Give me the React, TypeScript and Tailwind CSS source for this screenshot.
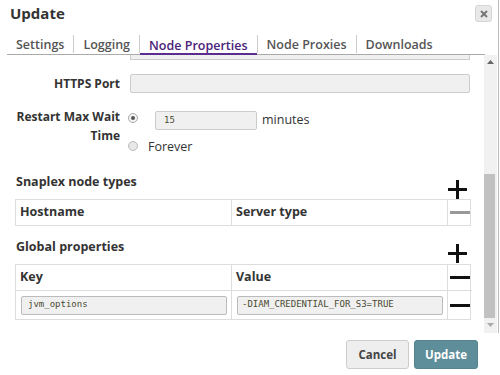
import React from 'react';

const Plus: React.FC = () => (
  <svg width="19" height="19" viewBox="0 0 19 19">
    <rect x="8" y="0" width="3" height="19" fill="#111" />
    <rect x="0" y="8" width="19" height="3" fill="#111" />
  </svg>
);

const Minus: React.FC<{ muted?: boolean }> = ({ muted }) => (
  <div className={muted ? 'w-[20px] h-[3px] bg-[#999]' : 'w-[20px] h-[3px] bg-[#111]'} />
);

const tabs = ['Settings', 'Logging', 'Node Properties', 'Node Proxies', 'Downloads'];

export default function App() {
  return (
    <div className="w-[500px] h-[375px] bg-white font-['Open_Sans',sans-serif] text-[#333] overflow-hidden">
      <div className="w-[499px] h-[333px] border-r border-[#bbb] flex flex-col">
        {/* Header */}
        <div className="flex items-center justify-between pt-[5px] pl-[10px] pr-[6px]">
          <h1 className="text-[15px] font-bold leading-[17px] text-[#333]">Update</h1>
          <button className="w-[17px] h-[17px] rounded-[3px] bg-[#e8e8e8] border border-[#d5d5d5] flex items-center justify-center">
            <svg width="8" height="8" viewBox="0 0 8 8">
              <path d="M1 1 L7 7 M7 1 L1 7" stroke="#777" strokeWidth="2" />
            </svg>
          </button>
        </div>

        {/* Tabs */}
        <div className="mt-[13px] ml-[7px] w-[478px] flex items-end border-b border-[#aaa] h-[20px]">
          {tabs.map((t, i) => (
            <React.Fragment key={t}>
              {i > 0 && <div className="w-px h-[18px] bg-[#ccc] mb-[1px]" />}
              <div
                className={
                  t === 'Node Properties'
                    ? 'px-[9px] pt-[2px] h-[20px] -mb-px border-b-2 border-[#5b2d8e] text-[#4b2378] text-[12.5px] font-semibold leading-[17px]'
                    : 'px-[9px] pt-[2px] h-[20px] text-[#555] text-[12.5px] font-semibold leading-[17px]'
                }
              >
                {t}
              </div>
            </React.Fragment>
          ))}
        </div>

        {/* Scroll area */}
        <div className="flex flex-1 min-h-0">
          <div className="ml-[7px] w-[477px] overflow-hidden">
            <div className="ml-[123px] w-[340px] h-[5px] border-x border-b border-[#ccc] bg-[#f0f0f0]" />

            <div className="mt-[14px] flex items-center">
              <div className="w-[113px] text-right text-[12px] font-bold leading-[19px]">HTTPS Port</div>
              <div className="ml-[10px] w-[340px] h-[19px] border border-[#ccc] rounded-[2px] bg-[#f0f0f0]" />
            </div>

            <div className="mt-[13px] flex items-start">
              <div className="w-[113px] pt-[1px] text-right text-[12px] font-bold leading-[19px]">Restart Max Wait Time</div>
              <div className="ml-[8px] flex flex-col">
                <div className="flex items-start">
                  <div className="mt-[7px] w-[10px] h-[10px] rounded-full border border-[#aaa] bg-[#f4f4f4] flex items-center justify-center">
                    <div className="w-[4px] h-[4px] rounded-full bg-[#555]" />
                  </div>
                  <div className="ml-[17px] mt-[5px] w-[102px] h-[19px] border border-[#ccc] rounded-[2px] bg-[#f0f0f0] flex items-center pl-[8px] font-['DejaVu_Sans_Mono',monospace] text-[9px] text-[#4a4a30]">
                    15
                  </div>
                  <div className="ml-[5px] mt-[4px] text-[12.5px] leading-[20px]">minutes</div>
                </div>
                <div className="mt-[6px] flex items-center">
                  <div className="w-[10px] h-[10px] rounded-full border border-[#bbb] bg-[#e8e8e8]" />
                  <div className="ml-[10px] mt-[3px] text-[12.5px] leading-[16px]">Forever</div>
                </div>
              </div>
            </div>

            {/* Snaplex node types */}
            <div className="mt-[19px] ml-[8px] w-[456px] flex items-start justify-between">
              <div className="ml-[1px] text-[12.5px] font-bold leading-[16px]">Snaplex node types</div>
              <div className="w-[25px] mt-[6px] flex justify-center pr-[2px]">
                <Plus />
              </div>
            </div>
            <div className="ml-[8px] w-[456px] grid grid-cols-[215px_216px_25px] border border-[#ddd]">
              <div className="h-[25px] px-[4px] flex items-center text-[12.5px] font-bold">Hostname</div>
              <div className="h-[25px] px-[4px] flex items-center text-[12.5px] font-bold border-l border-[#ddd]">Server type</div>
              <div className="h-[25px] flex items-center justify-center border-l border-[#ddd]">
                <Minus muted />
              </div>
            </div>

            {/* Global properties */}
            <div className="mt-[13px] ml-[8px] w-[456px] flex items-start justify-between">
              <div className="ml-[1px] text-[12.5px] font-bold leading-[16px]">Global properties</div>
              <div className="w-[25px] mt-[5px] flex justify-center pr-[2px]">
                <Plus />
              </div>
            </div>
            <div className="mt-[1px] ml-[8px] w-[456px] grid grid-cols-[215px_216px_25px] border border-[#ddd]">
              <div className="h-[25px] px-[4px] flex items-center text-[12.5px] font-bold">Key</div>
              <div className="h-[25px] px-[4px] flex items-center text-[12.5px] font-bold border-l border-[#ddd]">Value</div>
              <div className="h-[25px] flex items-center justify-center border-l border-[#ddd]">
                <Minus />
              </div>
              <div className="h-[29px] pl-[5px] pr-[4px] flex items-center border-t border-[#ddd]">
                <div className="w-full h-[19px] border border-[#bbb] rounded-[2px] bg-[#f0f0f0] flex items-center pl-[6px] font-['DejaVu_Sans_Mono',monospace] text-[9px] text-[#4a4a30]">
                  jvm_options
                </div>
              </div>
              <div className="h-[29px] pl-[5px] pr-[4px] flex items-center border-t border-l border-[#ddd]">
                <div className="w-full h-[19px] border border-[#bbb] rounded-[2px] bg-[#f0f0f0] flex items-center pl-[4px] font-['DejaVu_Sans_Mono',monospace] text-[9px] text-[#4a4a30]">
                  -DIAM_CREDENTIAL_FOR_S3=TRUE
                </div>
              </div>
              <div className="h-[29px] flex items-center justify-center border-t border-l border-[#ddd]">
                <Minus />
              </div>
            </div>
          </div>

          {/* Scrollbar */}
          <div className="w-[13px] bg-[#f1f1f1] flex flex-col items-center">
            <svg width="7" height="5" viewBox="0 0 7 5" className="mt-[5px]">
              <path d="M0 4 L3.5 0 L7 4 Z" fill="#666" />
            </svg>
            <div className="flex-1" />
            <div className="w-[11px] h-[144px] bg-[#c1c1c1] self-start" />
            <svg width="7" height="5" viewBox="0 0 7 5" className="mt-[4px] mb-[6px]">
              <path d="M0 1 L3.5 5 L7 1 Z" fill="#aaa" />
            </svg>
          </div>
        </div>
      </div>

      {/* Footer */}
      <div className="flex justify-end gap-[5px] pr-[22px] mt-[7px]">
        <button className="w-[63px] h-[29px] rounded-[3px] bg-[#eee] border border-[#ccc] text-[11.5px] font-bold text-[#444]">
          Cancel
        </button>
        <button className="w-[64px] h-[29px] rounded-[3px] bg-[#5e8e99] border border-[#55838e] text-[11.5px] font-bold text-white">
          Update
        </button>
      </div>
    </div>
  );
}
